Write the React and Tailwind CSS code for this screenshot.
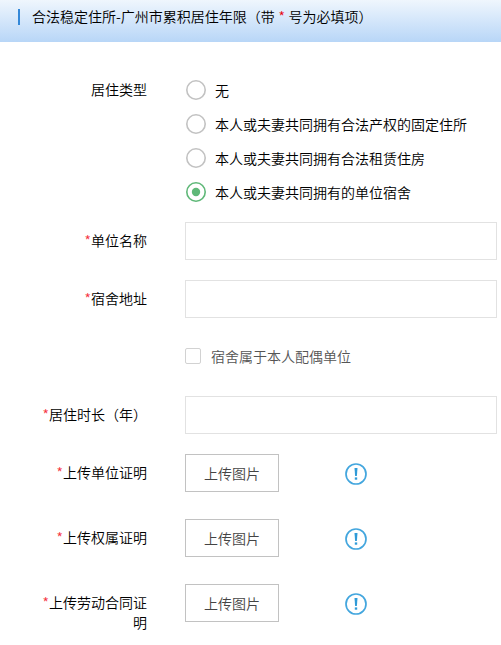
import React, { useState } from "react";

const housingTypes = [
  "无",
  "本人或夫妻共同拥有合法产权的固定住所",
  "本人或夫妻共同拥有合法租赁住房",
  "本人或夫妻共同拥有的单位宿舍",
];

function Row({ label, required, className, labelClass = "pt-2", children }) {
  return (
    <div className={`flex items-start ${className}`}>
      <div className={`w-[107px] ml-10 mr-[38px] shrink-0 text-right leading-5 ${labelClass}`}>
        {required && <span className="text-[#f5333d]">*</span>}
        {label}
      </div>
      {children}
    </div>
  );
}

function TextInput() {
  return <input type="text" className="w-[312px] h-[38px] px-3 border border-[#e2e2e2] bg-white outline-none" />;
}

function Radio({ label, checked, onChange }) {
  return (
    <label className="flex items-center h-[34px] pl-px cursor-pointer">
      <input type="radio" name="housing" className="sr-only" checked={checked} onChange={onChange} />
      <svg width="20" height="20" viewBox="0 0 20 20" fill="none" className="shrink-0">
        <circle cx="10" cy="10" r="9.2" stroke={checked ? "#5fb878" : "#c2c2c2"} strokeWidth="1.6" />
        {checked && <circle cx="10" cy="10" r="4.2" fill="#5fb878" />}
      </svg>
      <span className="ml-[9px] leading-5 whitespace-nowrap">{label}</span>
    </label>
  );
}

function Upload() {
  return (
    <div className="flex items-center">
      <button type="button" className="w-[94px] h-[38px] border border-[#c2c2c2] bg-white text-[#444] leading-5">
        上传图片
      </button>
      <svg width="22" height="22" viewBox="0 0 22 22" fill="none" className="ml-[66px] mt-[2px]">
        <circle cx="11" cy="11" r="10" stroke="#43a6de" strokeWidth="1.7" />
        <path d="M9.5 5h3l-.6 8h-1.8z" fill="#2f9bd8" />
        <rect x="9.8" y="14.4" width="2.4" height="2.3" fill="#2f9bd8" />
      </svg>
    </div>
  );
}

export default function App() {
  const [type, setType] = useState(3);
  const [spouse, setSpouse] = useState(false);

  return (
    <div className="w-[501px] h-[645px] overflow-hidden bg-white text-black text-[14px] font-[350] font-['Microsoft_YaHei','Noto_Sans_CJK_SC',sans-serif]">
      <div className="flex items-start h-[42px] pt-[9px] pl-[18px] bg-linear-to-b from-[#eff6fd] to-[#b8d6f7]">
        <span className="w-[2px] h-4 bg-[#3488d8]"></span>
        <h1 className="ml-3 -mt-[3px] font-[350] leading-5 whitespace-nowrap">
          合法稳定住所-广州市累积居住年限（带<span className="px-[0.5px] text-red-600"> * </span>号为必填项）
        </h1>
      </div>

      <Row label="居住类型" className="mt-[31px]" labelClass="pt-[6px]">
        <div>
          {housingTypes.map((item, index) => (
            <Radio key={item} label={item} checked={type === index} onChange={() => setType(index)} />
          ))}
        </div>
      </Row>
      <Row label="单位名称" required className="mt-[13px]">
        <TextInput />
      </Row>
      <Row label="宿舍地址" required className="mt-5">
        <TextInput />
      </Row>
      <Row className="mt-5">
        <label className="flex items-center h-[38px] text-[#555] cursor-pointer">
          <input
            type="checkbox"
            className="appearance-none w-4 h-4 -mt-[2px] border border-[#d2d2d2] rounded-[2px] checked:bg-[#5fb878]"
            checked={spouse}
            onChange={(e) => setSpouse(e.target.checked)}
          />
          <span className="ml-[10px] -mt-[2px] leading-5">宿舍属于本人配偶单位</span>
        </label>
      </Row>
      <Row label="居住时长（年）" required className="mt-5">
        <TextInput />
      </Row>
      <Row label="上传单位证明" required className="mt-5">
        <Upload />
      </Row>
      <Row label="上传权属证明" required className="mt-[27px]">
        <Upload />
      </Row>
      <Row label="上传劳动合同证明" required className="mt-[27px]">
        <Upload />
      </Row>
    </div>
  );
}
